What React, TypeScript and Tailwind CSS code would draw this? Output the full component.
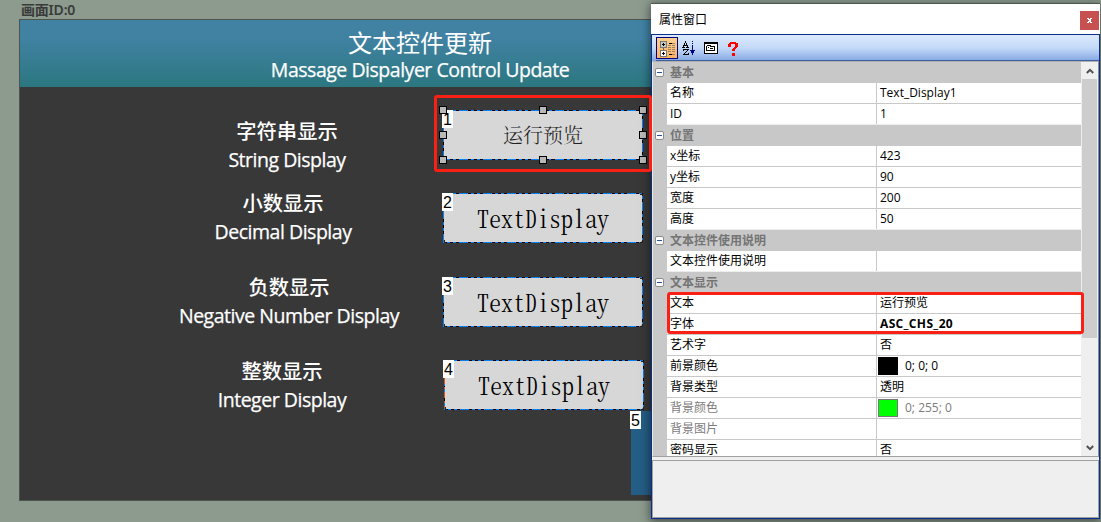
import React from "react";

type Row = {
  kind?: "category";
  name: string;
  value?: string;
  bold?: boolean;
  disabled?: boolean;
  swatch?: "black" | "green";
  tight?: boolean;
};

const rows: Row[] = [
  { kind: "category", name: "基本" },
  { name: "名称", value: "Text_Display1" },
  { name: "ID", value: "1", tight: true },
  { kind: "category", name: "位置" },
  { name: "x坐标", value: "423" },
  { name: "y坐标", value: "90" },
  { name: "宽度", value: "200" },
  { name: "高度", value: "50", tight: true },
  { kind: "category", name: "文本控件使用说明" },
  { name: "文本控件使用说明", value: "", tight: true },
  { kind: "category", name: "文本显示" },
  { name: "文本", value: "运行预览" },
  { name: "字体", value: "ASC_CHS_20", bold: true },
  { name: "艺术字", value: "否" },
  { name: "前景颜色", value: "0; 0; 0", swatch: "black" },
  { name: "背景类型", value: "透明" },
  { name: "背景颜色", value: "0; 255; 0", swatch: "green", disabled: true },
  { name: "背景图片", value: "", disabled: true },
  { name: "密码显示", value: "否" },
];

const labels = [
  { zh: "字符串显示", en: "String Display", pos: "left-[167px] top-[96px] w-[200px]" },
  { zh: "小数显示", en: "Decimal Display", pos: "left-[163px] top-[168px] w-[200px]" },
  { zh: "负数显示", en: "Negative Number Display", pos: "left-[144px] top-[252px] w-[250px]" },
  { zh: "整数显示", en: "Integer Display", pos: "left-[162px] top-[336px] w-[200px]" },
];

function Label({ zh, en, pos }: { zh: string; en: string; pos: string }) {
  return (
    <div className={`absolute flex flex-col items-center whitespace-nowrap font-medium text-white ${pos}`}>
      <span className="h-[29px] font-['Noto_Sans_CJK_SC',sans-serif] text-[20.3px] leading-[29px]">{zh}</span>
      <span className="h-[29px] font-['Open_Sans',sans-serif] text-[19.5px] leading-[29px] tracking-[-0.48px] [-webkit-text-stroke:0.25px_white]">{en}</span>
    </div>
  );
}

function Tag({ n }: { n: string }) {
  return (
    <span className="absolute -left-px top-0 flex h-[18px] w-[11px] items-center justify-center bg-white pt-px font-['Liberation_Sans',sans-serif] text-[16px] leading-none text-black">
      {n}
    </span>
  );
}

function Widget({ n, pos, selected }: { n: string; pos: string; selected?: boolean }) {
  return (
    <div className={`absolute flex h-[50px] w-[200px] items-center justify-center bg-[#d7d7d7] ${selected ? "" : "rounded-[5px]"} ${pos}`}>
      {selected ? (
        <span className="font-['Noto_Serif_CJK_SC','Noto_Sans_CJK_SC',serif] text-[20px] font-light leading-none text-[#222]">运行预览</span>
      ) : (
        <span className="font-['Noto_Serif_CJK_SC','Liberation_Mono',monospace] text-[24px] font-light leading-none text-black [font-feature-settings:'hwid']">TextDisplay</span>
      )}
      <svg className="absolute inset-0" width="200" height="50" fill="none" shapeRendering="crispEdges">
        <rect x=".5" y=".5" width="199" height="49" stroke="#0a80f5" />
        <rect x=".5" y=".5" width="199" height="49" stroke="#000" strokeDasharray="3 3 3 3 3 9" />
        {!selected && <path d="M197 1h2v2M197 49h2v-2M1 47v2h2" stroke="#222" />}
        {n === "4" && <path d="M.5 18v30" stroke="#e8501c" strokeDasharray="6 3 2 3" />}
      </svg>
      <Tag n={n} />
      {selected && (
        <svg className="absolute -left-1 -top-1" width="208" height="58" shapeRendering="crispEdges">
          {[[0, 0], [100, 0], [200, 0], [0, 25], [200, 25], [0, 50], [100, 50], [200, 50]].map(([x, y]) => (
            <rect key={`${x}-${y}`} x={x + 0.5} y={y + 0.5} width="7" height="7" fill="#b8b8b8" stroke="#000" />
          ))}
        </svg>
      )}
    </div>
  );
}

function ToolIcons() {
  return (
    <div className="flex h-[21px] items-center">
      <div className="flex h-[22px] w-[22px] border border-[#000080] bg-gradient-to-b from-[#ffd08c] to-[#ffb060]">
        <svg width="20" height="20" shapeRendering="crispEdges" fill="none">
          <path d="M6.5 9v3" stroke="#666" />
          <rect x="3.5" y="3.5" width="6" height="6" fill="#c8c8c8" stroke="#777" />
          <path d="M5 6.5h3M6.5 5v3" stroke="#000" />
          <rect x="3.5" y="12.5" width="6" height="6" fill="#fff" stroke="#777" />
          <path d="M5 15.5h3M6.5 14v3" stroke="#000" />
          <path d="M12 5.5h3M12 16.5h3" stroke="#000" />
          <path d="M11 7.5h3m1 0h3M11 9.5h3m1 0h3M11 11.5h3m1 0h3M11 13.5h3m1 0h3M15 5.5h3M15 16.5h3" stroke="#98826a" />
        </svg>
      </div>
      <svg className="ml-1" width="14" height="18" shapeRendering="crispEdges" fill="none">
        <path d="M3.5 2v2M2.5 4v2M4.5 4v2M1.5 6v2M5.5 6v2M2 6.500h3M0 8.500h3M4 8.500h3M1 10.5h6M1.5 10v2M5.5 11v1M4.5 12v1M3.5 13v1M2.5 14v1M1 15.5h6M6.5 14v2" stroke="#000" />
        <path d="M10.5 2v1M10.5 4v1M10.5 6v6" stroke="#000080" />
        <path d="M8 11h5v1h-1v2h-1v2h-1v-2H9v-2H8z" fill="#000080" />
      </svg>
      <svg className="ml-[8px] mt-px" width="14" height="12" shapeRendering="crispEdges">
        <path fill="#000" d="M0 0h14v12H0z" />
        <path fill="#fff" d="M1 2h12v9H1z" />
        <path fill="#000" d="M3 3h4v1h4v5H2V4h1z" />
        <path fill="#fff" d="M3 4h3v1h4v3H3z" />
        <path fill="#000" d="M4 5h1v1H4zM6 6h3v1H6z" />
      </svg>
      <svg className="ml-[10px] mt-px" width="11" height="15" shapeRendering="crispEdges">
        <path fill="#f00" d="M2 1h6v1h2v4H9v1H8v1H7v2H4V8h1V7h1V6h1V3H3v3H0V3h1V2h1zM4 12h3v3H4z" />
      </svg>
    </div>
  );
}

function PropertyRow({ row }: { row: Row }) {
  if (row.kind === "category") {
    return (
      <div className="flex h-[21px] items-center">
        <span className="ml-[2px] flex h-[9px] w-[9px] items-center justify-center rounded-[2px] border border-[#8c8c8c] bg-white">
          <span className="h-px w-[5px] bg-[#2a4fa8]" />
        </span>
        <span className="ml-[6px] pb-[2px] font-['Noto_Sans_CJK_SC',sans-serif] font-bold text-[#747474]">{row.name}</span>
      </div>
    );
  }
  return (
    <div className={`ml-[14px] flex h-[21px] border-b bg-white ${row.tight ? "border-[#ededed]" : "border-[#c8c8c8]"} ${row.disabled ? "text-[#7c7c7c]" : "text-black"}`}>
      <span className="w-[209px] shrink-0 pl-[3px] leading-[19px]">{row.name}</span>
      <span className={`flex flex-1 border-l border-[#c8c8c8] leading-[19px] ${row.swatch ? "pl-px" : "pl-[3px]"} ${row.bold ? "font-bold tracking-[0.35px]" : ""}`}>
        {row.swatch && (
          <span className={`mr-[7px] mt-px h-[18px] w-5 border ${row.swatch === "green" ? "border-[#777] bg-[#0f0]" : "border-black bg-black"}`} />
        )}
        {row.value}
      </span>
    </div>
  );
}

function PropertyWindow() {
  return (
    <section className="absolute left-[651px] top-[3px] flex h-[516px] w-[449px] flex-col border-t border-[#4b5751] bg-[#efefef] text-[12px] shadow-[0_2px_9px_1px_rgba(0,0,0,0.5)]">
      <header className="flex h-[30px] shrink-0 items-center justify-between bg-white pl-2">
        <h2 className="font-['Noto_Sans_CJK_SC',sans-serif] text-black">属性窗口</h2>
        <button className="mr-px mt-[3px] flex h-[19px] w-[19px] items-center justify-center bg-[#c75050]">
          <svg width="5" height="5" shapeRendering="crispEdges">
            <path fill="#fff" d="M0 0h2v1h1V0h2v1H4v1H3.500v1H4v1h1v1H3V4H2v1H0V4h1V3h.5V2H1V1H0z" />
          </svg>
        </button>
      </header>
      <div className="flex min-h-0 flex-1 flex-col border border-[#0a308c]">
        <div className="flex h-[26px] shrink-0 flex-col bg-gradient-to-b from-[#dceafd] via-[#c3d9f8] to-[#84a7e2] pl-1 pt-[2px]">
          <ToolIcons />
          <div className="mt-[2px] h-px bg-[#3b5f9f]" />
        </div>
        <div className="flex h-[396px] shrink-0 border-b border-l border-r border-t border-b-[#a0a0a0] border-l-[#e8e8e8] border-r-[#8c8c8c] border-t-[#b0b0b0]">
          <div className="w-[428px] shrink-0 overflow-hidden bg-[#c8c8c8] font-['Open_Sans','Noto_Sans_CJK_SC',sans-serif]">
            {rows.map((row, i) => (
              <PropertyRow key={i} row={row} />
            ))}
          </div>
          <div className="ml-px flex w-[15px] shrink-0 flex-col bg-[#efefef]">
            <div className="flex h-[17px] items-center justify-center">
              <svg width="8" height="6" fill="none"><path d="M.8 5 4 1.800 7.200 5" stroke="#505050" strokeWidth="2" /></svg>
            </div>
            <div className="mb-auto h-[259px] bg-[#cdcdcd]" />
            <div className="flex h-[17px] items-center justify-center">
              <svg width="8" height="6" fill="none"><path d="M.8 1 4 4.200 7.200 1" stroke="#505050" strokeWidth="2" /></svg>
            </div>
          </div>
        </div>
        <div className="mt-[3px] flex-1 border border-[#a0a0a0]" />
      </div>
    </section>
  );
}

export default function App() {
  return (
    <main className="relative h-[522px] w-[1101px] overflow-hidden bg-[#8c9b8e]">
      <div className="pl-[21px] pt-px font-['Noto_Sans','Noto_Sans_CJK_SC',sans-serif] text-[14px] font-semibold leading-[18px] tracking-[-0.2px] text-[#3a3a3a]">
        画面ID:0
      </div>
      <section className="relative ml-[19px] h-[482px] w-[640px] border border-[#4c5450] bg-[#383838]">
        <header className="flex h-[67px] flex-col items-center bg-gradient-to-b from-[#4182a3] from-25% to-[#2b7780] pl-[162px] text-white">
          <h1 className="mt-[8px] h-[28px] font-['Noto_Sans_CJK_SC',sans-serif] text-[24px] leading-[28px]">文本控件更新</h1>
          <p className="font-['Open_Sans',sans-serif] text-[19.5px] font-medium leading-[27px] tracking-[-0.48px] [-webkit-text-stroke:0.25px_white]">Massage Dispalyer Control Update</p>
        </header>
        {labels.map((l) => (
          <Label key={l.zh} {...l} />
        ))}
        <Widget n="1" pos="left-[423px] top-[90px]" selected />
        <Widget n="2" pos="left-[423px] top-[173px]" />
        <Widget n="3" pos="left-[423px] top-[257px]" />
        <Widget n="4" pos="left-[424px] top-[340px]" />
        <div className="absolute left-[611px] top-[391px] h-[84px] w-[40px] bg-[#245d85]">
          <Tag n="5" />
        </div>
      </section>
      <PropertyWindow />
      <div className="absolute left-[434px] top-[95px] h-[77px] w-[218px] rounded-[3px] border-[3px] border-[#fb2015]" />
      <div className="absolute left-[667px] top-[292px] h-[42px] w-[417px] rounded-[3px] border-[3px] border-[#fb2015]" />
    </main>
  );
}
